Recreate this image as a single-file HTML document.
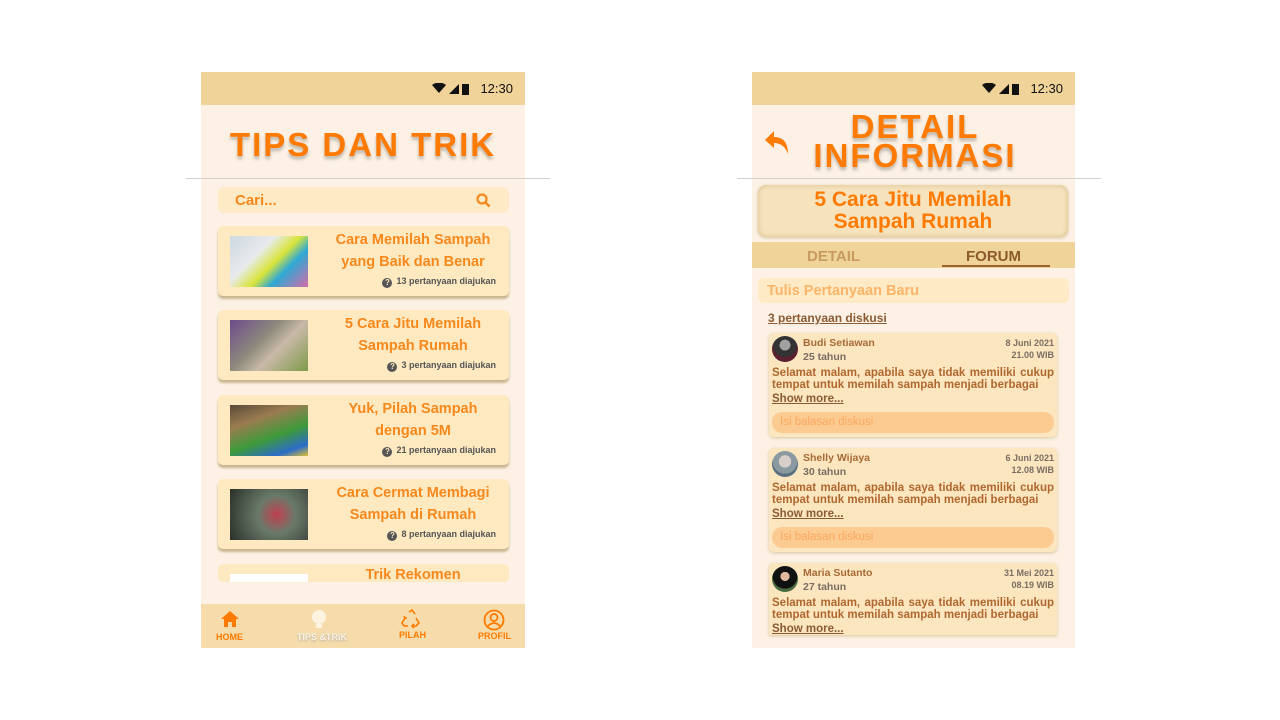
<!DOCTYPE html>
<html><head><meta charset="utf-8"><style>
*{margin:0;padding:0;box-sizing:border-box}
body{width:1280px;height:720px;background:#fff;position:relative;overflow:hidden;font-family:"Liberation Sans",sans-serif}
.ab{position:absolute}
.phone{position:absolute;top:72px;width:324px;height:576px;background:#fcf1e4;overflow:hidden}
.sb{position:absolute;left:0;top:0;width:100%;height:33px;background:#efd398}
.time{position:absolute;right:12px;top:9px;font-size:13px;color:#111}
.hr{position:absolute;top:178px;height:1px;background:#d5d0ca;width:364px}
.title{color:#ff7a00;font-weight:bold;text-align:center;letter-spacing:2px;text-shadow:0 3px 3px rgba(0,0,0,.25)}
.card{position:absolute;left:17px;width:291px;height:70px;background:#fee9c1;border-radius:5px;box-shadow:0 3px 2px #c9b58f}
.card .img{position:absolute;left:12px;top:10px;width:78px;height:51px}
.card .t{position:absolute;left:108px;width:174px;top:3px;text-align:center;color:#f7881b;font-weight:bold;font-size:14.5px;line-height:22px}
.card .q{position:absolute;right:13px;top:50px;font-size:9px;color:#555;font-weight:bold}
.q i{display:inline-block;width:10px;height:10px;border-radius:50%;background:#555;color:#fee9c1;font-style:normal;font-size:8px;text-align:center;line-height:10px;margin-right:4px;vertical-align:-1px}
.nav{position:absolute;bottom:0;left:0;width:100%;height:44px;background:#f5dcaa}
.nl{position:absolute;top:28px;font-size:9px;font-weight:bold;color:#ff7a00}
.cm{position:absolute;left:17px;width:288px;background:#fbe6c0;border-radius:5px;box-shadow:0 1px 3px #d7c39d;overflow:hidden}
.av{position:absolute;left:3px;top:3px;width:26px;height:26px;border-radius:50%}
.nm{position:absolute;left:34px;top:4px;font-size:10.5px;font-weight:bold;color:#a86a34}
.ag{position:absolute;left:34px;top:18px;font-size:10.5px;font-weight:bold;color:#7b6d63}
.dt{position:absolute;right:3px;top:4px;font-size:9px;font-weight:bold;color:#7b6d63;text-align:right;line-height:12px}
.tx{position:absolute;left:3px;right:3px;top:34px;font-size:11.5px;font-weight:bold;color:#b0672e;text-align:justify;text-align-last:left;line-height:12px}
.sm{position:absolute;left:3px;top:60px;font-size:11.5px;font-weight:bold;color:#8a5a33;text-decoration:underline}
.rp{position:absolute;left:3px;right:3px;top:79px;height:21px;border-radius:10px;background:#fccb92;color:#fca75e;font-size:11.5px;line-height:21px;padding-left:8px}
</style></head><body>

<div class="phone" style="left:201px">
 <div class="sb"><svg class="ab" style="left:231px;top:11px" width="40" height="12"><path d="M0 2 Q7 -3 14 2 L7 10Z" fill="#111"/><path d="M17 11 L27 1 L27 11Z" fill="#111"/><rect x="30" y="1" width="7" height="11" fill="#111"/></svg><div class="time">12:30</div></div>
 <div class="title ab" style="left:0;width:324px;top:54px;font-size:33px">TIPS DAN TRIK</div>
 <div class="ab" style="left:17px;top:115px;width:291px;height:26px;background:#feeac4;border-radius:6px">
  <div class="ab" style="left:17px;top:5px;font-size:15px;font-weight:bold;color:#f7881b">Cari...</div>
  <svg class="ab" style="left:258px;top:6px" width="15" height="15"><circle cx="6" cy="6" r="4.5" stroke="#f7881b" stroke-width="2.2" fill="none"/><path d="M9.5 9.5 L13.5 13.5" stroke="#f7881b" stroke-width="2.5"/></svg>
 </div>
 <div class="card" style="top:154px"><div class="img" style="background:linear-gradient(135deg,#ccd8e0 0%,#e8eaec 35%,#d8e43a 55%,#2ea9d4 70%,#d66aa8 100%)"></div><div class="t">Cara Memilah Sampah yang Baik dan Benar</div><div class="q"><i>?</i>13 pertanyaan diajukan</div></div>
 <div class="card" style="top:238px"><div class="img" style="background:linear-gradient(135deg,#6c4b8c 0%,#8d8a7c 40%,#c9b9a8 60%,#7e9a48 100%)"></div><div class="t">5 Cara Jitu Memilah Sampah Rumah</div><div class="q"><i>?</i>3 pertanyaan diajukan</div></div>
 <div class="card" style="top:323px"><div class="img" style="background:linear-gradient(160deg,#5a4a3a 0%,#9a7c50 30%,#3f9a3a 60%,#2b6cc8 85%,#e0c030 100%)"></div><div class="t">Yuk, Pilah Sampah<br>dengan 5M</div><div class="q"><i>?</i>21 pertanyaan diajukan</div></div>
 <div class="card" style="top:407px"><div class="img" style="background:radial-gradient(circle at 60% 50%,#c04050 0%,#6a7a6a 35%,#2a3028 100%)"></div><div class="t">Cara Cermat Membagi Sampah di Rumah</div><div class="q"><i>?</i>8 pertanyaan diajukan</div></div>
 <div class="card" style="top:492px;height:18px;box-shadow:none;overflow:hidden"><div class="img" style="background:#fff;height:8px"></div><div class="t" style="top:0">Trik Rekomen</div></div>
 <div class="ab" style="left:0;top:510px;width:324px;height:22px;background:#fcf1e4"></div>
 <div class="nav">
  <svg class="ab" style="left:19px;top:6px" width="20" height="18"><path d="M10 1 L19 9 H16 V17 H12 V12 H8 V17 H4 V9 H1Z" fill="#ff7a00"/></svg>
  <div class="nl" style="left:15px">HOME</div>
  <svg class="ab" style="left:108px;top:4px" width="22" height="22"><circle cx="10" cy="9" r="7" fill="#fdf3e0"/><rect x="7" y="16" width="6" height="4" fill="#fdf3e0"/></svg>
  <div class="nl" style="left:96px;color:#fdf3e0;text-shadow:0 1px 2px #aaa">TIPS &amp;TRIK</div>
  <svg class="ab" style="left:200px;top:5px" width="22" height="20" fill="none" stroke="#ff7a00" stroke-width="1.6"><path d="M8 3 L11 1 L14 5 M15 9 L18 14 L15 17 H11 M7 17 H3 L1 14 L4 9 M6 9 L4 9 L3 7 M13 19 L11 17 L13 15"/></svg>
  <div class="nl" style="left:198px;top:26px">PILAH</div>
  <svg class="ab" style="left:282px;top:5px" width="22" height="22" fill="none" stroke="#ff7a00" stroke-width="1.8"><circle cx="11" cy="11" r="9.5"/><circle cx="11" cy="8.5" r="3.5"/><path d="M5 17 Q11 11 17 17"/></svg>
  <div class="nl" style="left:277px;top:27px">PROFIL</div>
 </div>
</div>
<div class="hr" style="left:186px"></div>

<div class="phone" style="left:752px;width:323px">
 <div class="sb"><svg class="ab" style="left:230px;top:11px" width="40" height="12"><path d="M0 2 Q7 -3 14 2 L7 10Z" fill="#111"/><path d="M17 11 L27 1 L27 11Z" fill="#111"/><rect x="30" y="1" width="7" height="11" fill="#111"/></svg><div class="time">12:30</div></div>
 <svg class="ab" style="left:12px;top:58px" width="26" height="26"><path d="M10 1 L1 10 L10 18 V13 Q20 13 24 24 Q24 7 10 7Z" fill="#ff7a00"/></svg>
 <div class="title ab" style="left:48px;width:230px;top:40px;font-size:33px;line-height:29px">DETAIL<br>INFORMASI</div>
 <div class="ab" style="left:6px;top:113px;width:310px;height:52px;background:#f6e3bd;border-radius:8px;box-shadow:inset 0 0 6px #d8bf8f,0 1px 3px #d8c29c;color:#ff7a00;font-weight:bold;font-size:21px;line-height:22px;text-align:center;padding-top:4px">5 Cara Jitu Memilah<br>Sampah Rumah</div>
 <div class="ab" style="left:0;top:170px;width:323px;height:26px;background:#efd398">
  <div class="ab" style="left:55px;top:6px;font-size:15px;font-weight:bold;color:#c99a5f">DETAIL</div>
  <div class="ab" style="left:214px;top:6px;font-size:15px;font-weight:bold;color:#8c5a2c">FORUM</div>
  <div class="ab" style="left:190px;top:23px;width:108px;height:2px;background:#9b6231"></div>
 </div>
 <div class="ab" style="left:6px;top:206px;width:311px;height:25px;background:#feeac4;border-radius:6px;color:#fcb469;font-weight:bold;font-size:14.5px;line-height:27px;padding-left:9px">Tulis Pertanyaan Baru</div>
 <div class="ab" style="left:16px;top:239px;font-size:12px;font-weight:bold;color:#8a5a33;text-decoration:underline">3 pertanyaan diskusi</div>
 <div class="cm" style="top:261px;height:104px"><div class="av" style="background:radial-gradient(circle at 50% 35%,#a0a0a0 0 25%,#333 26% 55%,#5a2030 56%)"></div><div class="nm">Budi Setiawan</div><div class="ag">25 tahun</div><div class="dt">8 Juni 2021<br>21.00 WIB</div><div class="tx">Selamat malam, apabila saya tidak memiliki cukup tempat untuk memilah sampah menjadi berbagai</div><div class="sm">Show more...</div><div class="rp">Isi balasan diskusi</div></div>
 <div class="cm" style="top:376px;height:104px"><div class="av" style="background:radial-gradient(circle at 50% 40%,#d8d0c8 0 30%,#8a9aa0 31% 60%,#5a7080 61%)"></div><div class="nm">Shelly Wijaya</div><div class="ag">30 tahun</div><div class="dt">6 Juni 2021<br>12.08 WIB</div><div class="tx">Selamat malam, apabila saya tidak memiliki cukup tempat untuk memilah sampah menjadi berbagai</div><div class="sm">Show more...</div><div class="rp">Isi balasan diskusi</div></div>
 <div class="cm" style="top:491px;height:72px;border-radius:5px 5px 0 0"><div class="av" style="background:radial-gradient(circle at 50% 40%,#e0b8a0 0 22%,#111 23% 60%,#4a6a40 61%)"></div><div class="nm">Maria Sutanto</div><div class="ag">27 tahun</div><div class="dt">31 Mei 2021<br>08.19 WIB</div><div class="tx">Selamat malam, apabila saya tidak memiliki cukup tempat untuk memilah sampah menjadi berbagai</div><div class="sm">Show more...</div></div>
</div>
<div class="hr" style="left:737px"></div>
</body></html>
